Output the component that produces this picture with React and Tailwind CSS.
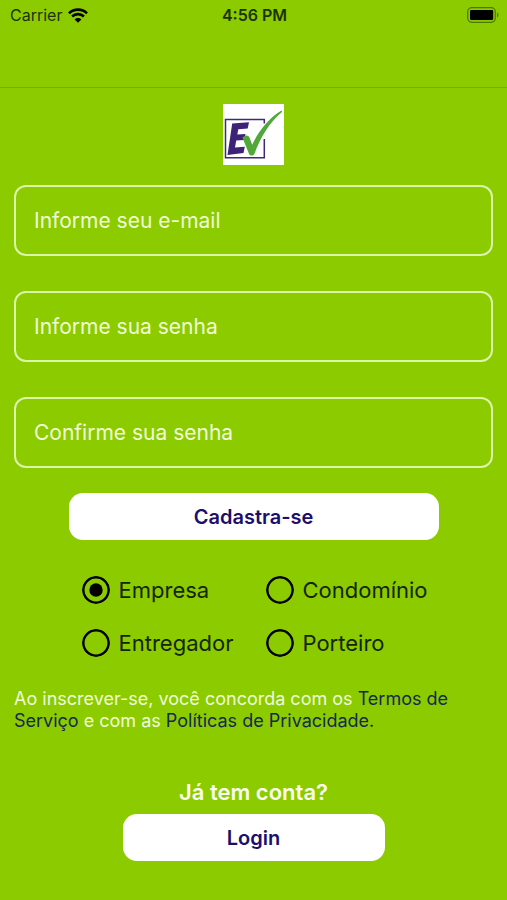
import React, { useState } from 'react';

const fields = [
  { id: 'email', type: 'email', placeholder: 'Informe seu e-mail' },
  { id: 'password', type: 'password', placeholder: 'Informe sua senha' },
  { id: 'confirm', type: 'password', placeholder: 'Confirme sua senha' },
];

const profiles = ['Empresa', 'Condomínio', 'Entregador', 'Porteiro'];

function StatusBar() {
  return (
    <div className="grid grid-cols-3 items-center h-[30px] pl-[10px] pr-2 text-base text-[#1b3300]">
      <div className="flex items-center gap-[6px]">
        <span>Carrier</span>
        <svg className="w-5 h-[15px] text-black" aria-hidden="true" viewBox="0 0 20 15" fill="none">
          <path stroke="currentColor" strokeWidth="2.6" d="M1 5.3a12.8 12.8 0 0 1 18 0M4.1 8.5a8.4 8.4 0 0 1 11.8 0" />
          <path fill="currentColor" d="M10 14.8 6.6 11.4a4.8 4.8 0 0 1 6.8 0Z" />
        </svg>
      </div>
      <span className="text-center font-semibold whitespace-nowrap">4:56 PM</span>
      <svg className="w-8 h-4 justify-self-end" aria-hidden="true" viewBox="0 0 32 16" fill="none">
        <rect x="0.7" y="0.7" width="27.6" height="14.6" rx="4.2" stroke="#4c7a00" strokeWidth="1.3" />
        <rect x="3" y="3" width="23.2" height="10" rx="1.2" fill="#000" />
        <path d="M30 5.5c2 .7 2 4.3 0 5Z" fill="#4c7a00" />
      </svg>
    </div>
  );
}

function Logo() {
  return (
    <svg className="w-[61px] h-[61px] mx-auto" role="img" aria-label="EV" viewBox="0 0 61 61">
      <rect width="61" height="61" fill="#fff" />
      <path d="M41.300 19.500V15.500H2.500v38.300h38.800V35" fill="none" stroke="#3d2a7c" strokeWidth="1.500" />
      <path d="M9.200 19.500 26 18.200l-1.300 6.200-9.400.8-1 5.300 8.200-.6-1.200 6-8.100.6-1.200 7 9.800-.8-1.300 6.300-16 1.900Z" fill="#3d2277" />
      <path d="M19.400 33.500c2.800-2.600 5.800-2.800 7.200.3l2.600 6.900C36 26.400 46.500 13.500 58.200 6.800c1-.3 1.200.7.5 1.500C46.500 18.500 37.500 33.500 31.600 49.500c-1 2.700-4.600 2.800-5.600.2Z" fill="#50a83a" />
    </svg>
  );
}

function ProfileOption({ name, checked, onChange }) {
  return (
    <label className="relative flex items-center gap-[9px] text-[22px] leading-7 text-[#132600]">
      <input
        type="radio"
        name="profile"
        value={name}
        checked={checked}
        onChange={onChange}
        className="peer sr-only"
      />
      <svg
        className="w-7 h-7 shrink-0 rounded-full text-black peer-focus-visible:ring-2 peer-focus-visible:ring-white"
        aria-hidden="true"
        viewBox="0 0 28 28"
      >
        <circle cx="14" cy="14" r="12.700" fill="none" stroke="currentColor" strokeWidth="2.500" />
        {checked && <circle cx="14" cy="14" r="6.700" fill="currentColor" />}
      </svg>
      <span>{name}</span>
    </label>
  );
}

function App() {
  const [profile, setProfile] = useState('Empresa');

  return (
    <div className="min-h-screen bg-[#8bcb00] font-['Inter',sans-serif]">
      <header className="h-[88px] border-b border-[#79b000]">
        <StatusBar />
      </header>

      <main className="px-[14px] pt-4 pb-8">
        <Logo />

        <form onSubmit={(e) => e.preventDefault()}>
          <div className="flex flex-col gap-[35px] pt-5">
            {fields.map((field) => (
              <input
                key={field.id}
                id={field.id}
                type={field.type}
                aria-label={field.placeholder}
                placeholder={field.placeholder}
                className="w-full h-[71px] px-[18px] rounded-xl border-2 border-[#dcf5a6] text-[21px] text-white placeholder:text-[#f1fbd8] outline-none"
              />
            ))}
          </div>

          <button
            type="submit"
            className="block w-[370px] max-w-full h-[47px] mx-auto mt-[25px] rounded-[14px] bg-white text-xl font-semibold text-[#1b0f6b]"
          >
            Cadastra-se
          </button>

          <div
            role="radiogroup"
            aria-label="Tipo de conta"
            className="grid grid-cols-2 gap-y-[25px] w-[368px] max-w-full mx-auto mt-9 px-3 gap-x-6"
          >
            {profiles.map((name) => (
              <ProfileOption
                key={name}
                name={name}
                checked={profile === name}
                onChange={() => setProfile(name)}
              />
            ))}
          </div>
        </form>

        <p className="mt-[31px] text-lg leading-[22px] text-[#f1fbd8]">
          Ao inscrever-se, você concorda com os{' '}
          <a href="#termos" className="text-[#152a52]">Termos de Serviço</a> e com as{' '}
          <a href="#privacidade" className="text-[#152a52]">Políticas de Privacidade.</a>
        </p>

        <p className="mt-[46px] text-center text-[22px] leading-7 font-semibold text-[#fafff0]">
          Já tem conta?
        </p>
        <button
          type="button"
          className="block w-[262px] max-w-full h-[47px] mx-auto mt-2 rounded-[14px] bg-white text-xl font-semibold text-[#1b0f6b]"
        >
          Login
        </button>
      </main>
    </div>
  );
}

export default App;
